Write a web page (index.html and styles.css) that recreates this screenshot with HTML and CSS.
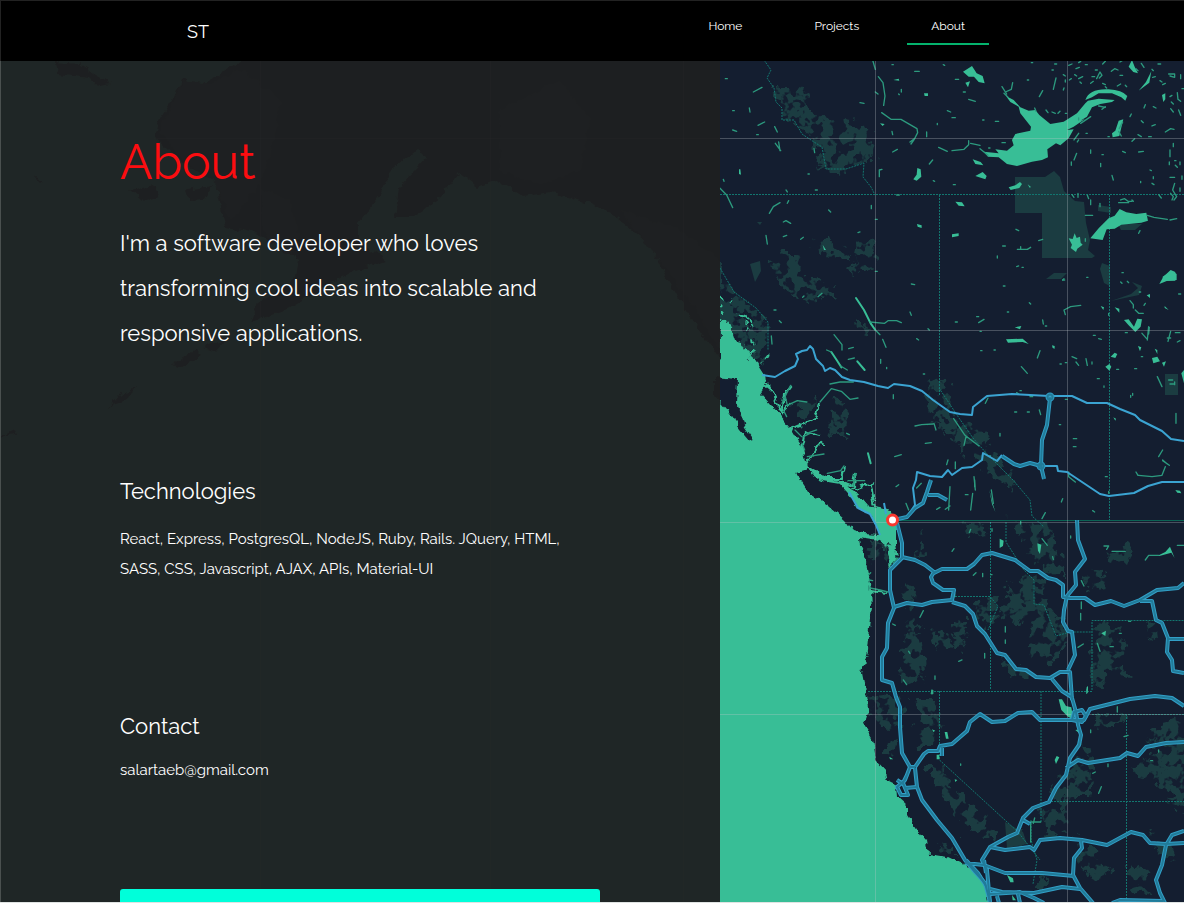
FILE: index.html
```html
<!DOCTYPE html>
<html lang="en">
<head>
<meta charset="utf-8">
<meta name="viewport" content="width=device-width, initial-scale=1">
<title>ST - About</title>
<link rel="stylesheet" href="styles.css">
</head>
<body>
<div class="shell">
  <svg class="map" viewBox="0 0 1184 903" preserveAspectRatio="xMinYMin slice" aria-hidden="true">
    <defs>
      <filter id="coast" x="0" y="0" width="1184" height="903" filterUnits="userSpaceOnUse" color-interpolation-filters="sRGB">
        <feTurbulence type="fractalNoise" baseFrequency=".12" numOctaves="3" seed="4"/>
        <feDisplacementMap in="SourceGraphic" scale="8" xChannelSelector="R" yChannelSelector="G"/>
      </filter>
      <filter id="mottle" x="700" y="40" width="500" height="880" filterUnits="userSpaceOnUse" color-interpolation-filters="sRGB">
        <feTurbulence type="fractalNoise" baseFrequency=".09" numOctaves="3" seed="8" result="n"/>
        <feDisplacementMap in="SourceGraphic" in2="n" scale="22" xChannelSelector="R" yChannelSelector="G" result="d"/>
        <feColorMatrix in="n" type="matrix" values="0 0 0 0 0  0 0 0 0 0  0 0 0 0 0  0 0 14 0 -6" result="m"/>
        <feComposite in="d" in2="m" operator="in"/>
      </filter>
      <g id="freeways">
        <path d="M898 519L907 517 915 508 923 503 927 492 931 480M928 495l10 0 9 5M897 523L902 543V558L890 570V590L894 608 888 623 887 648 882 657V680L892 683 896 697 900 707V727L902 753 910 767H915M915 768L917 787 922 800 937 820 952 838 965 860 975 872 985 883 990 902"/>
        <path d="M894 607L907 603 922 605 932 602 952 600 954 590 943 590 933 583 931 577 934 572 925 565 915 560 902 557M934 573L942 569H967L974 564 982 555 992 553 1015 560 1030 571 1038 571 1048 578 1056 580 1063 585V597L1070 598 1085 598 1095 605 1111 601 1124 606 1140 600 1157 590 1178 588 1184 583"/>
        <path d="M952 602L965 606 973 614 977 626 985 634 997 653 1005 655 1016 669 1026 670 1036 677 1050 678 1060 672 1070 672 1072 700M1052 679L1062 691 1073 698M1077 520L1078 540 1085 559 1075 572 1076 585 1067 596 1064 610 1063 622 1068 631 1072 632 1075 655 1068 670"/>
        <path d="M1140 601H1152L1156 620 1162 623 1168 638 1167 652 1172 660 1173 671 1184 673M1168 639H1184"/>
        <path d="M1072 698L1076 712 1078 725 1081 735 1079 745 1070 758 1066 775 1056 788 1049 802 1033 808 1023 818 1017 833 1008 837 990 847 982 860 987 870 990 903M1023 820L1030 824M910 767L905 780 897 787 901 795 908 795 903 783 907 775M917 787L905 788M897 780l6 4M915 767L924 754 928 751 938 751 940 746 952 744 967 731 970 722 980 714 992 722 1005 721 1018 713 1032 712 1040 720 1062 720 1084 720 1090 709 1110 704 1130 699 1155 696 1172 698 1184 706M942 746v10M1066 768L1078 760 1088 763 1120 758 1127 753 1138 756 1146 747 1166 743 1184 742"/>
        <path d="M990 847L1005 850 1030 847 1034 850 1040 840 1060 838 1082 840 1107 845 1131 832 1143 835 1150 843 1166 844 1184 843M1184 831L1172 835 1166 845 1162 865 1156 880 1160 893 1165 903M1081 841L1082 848 1074 858 1073 875 1080 888 1093 903M965 863L984 865 1005 873 1042 873 1074 876M990 889L1002 892 1034 893 1062 887 1080 889M990 894L1020 892 1034 898 1044 903M966 860L978 873 986 886M984 860L986 873M1112 903L1120 900 1163 901M997 896L999 903M1018 894L1020 903"/>
        <path d="M1050 398L1047 425 1042 440 1041 466 1044 479M1002 456L1014 464 1020 466 1030 463 1041 466M1074 712l8 -2 4 6 -4 6 -10 -2Z"/>
        <circle cx="1050" cy="397" r="2.500"/>
        <circle cx="1041" cy="466" r="2.500"/>
      </g>
    </defs>
    <rect class="sea" width="1184" height="903"/>
    <g filter="url(#coast)">
      <path class="land" d="M241 40V60L216 77 197 87 184 77 174 97 158 123 154 137 179 160 216 183 220 203 225 227 257 233 298 260 294 280 257 303 250 323 285 310 349 273 386 260 358 240 358 223 381 193 390 170 418 150 427 157 399 187 395 217 413 217 441 197 459 173 478 187 496 180 523 197 551 192 588 203 611 213 652 247 666 277 689 315 720 360V294L727 310 729 318 737 342 751 350 758 363 765 374 766 384 760 393 782 417 790 427 802 447 808 467 828 478 846 482 856 494 868 507 880 509 889 512 894 521 889 532 896 545 897 560 890 567 887 556 888 546 878 540 859 537 860 547 865 558 869 577 871 590 872 607 870 627 868 650 862 672 865 687 868 700 869 710 864 725 873 740 876 760 887 772 889 781 897 785 898 797 907 805 907 815 918 832 927 842 929 854 948 857 965 865 979 873 987 887 991 915H1200V40Z"/>
      <path class="land" d="M797 473L807 470 822 481 840 484 852 498 862 510 872 517 880 534 863 533 853 530 845 520 828 505 808 492 800 480ZM715 378L738 380 737 403 745 427 752 437 751 442 740 429 727 410 715 396ZM55 62L80 64 96 75 110 83 97 86 90 78 73 76 57 74ZM130 190L153 185 160 196 143 202ZM185 190L213 186 205 199 190 200ZM173 364L195 350 200 355 178 370ZM107 410L120 395 135 387 128 400 113 405ZM0 437L15 430 17 435ZM33 176L43 181 40 183ZM204 348L230 336 215 352Z"/>
      <path class="forest" d="M184 80L210 84 240 70 262 84 280 100 276 130 262 180 232 220 222 200 216 184 180 158 160 130ZM500 110L560 80 590 120 580 170 540 185 500 170ZM620 210L680 230 720 260V350L690 300 666 270 640 235ZM262 190L290 200 300 240 290 255 262 230Z"/>
      <path class="water-line" d="M745 322l6 10 3 20 -2 8M724 310l8 -10M722 322l12 -8 12 3 8 10M770 353l-8 10M768 385l14 28 10 -10M781 413l4 -20 6 -8M788 430l14 -6 14 -6 4 -14M800 450l4 -18 16 4M806 464l14 -20 6 2M827 478l14 0 3 -12M836 480l18 6 2 -14M852 490l22 -8M875 507l-4 -22M735 340l-14 -4M893 535l-10 14M870 591l16 2M762 378l8 14"/>
      <path class="lake" d="M848 490L856 492 866 506 880 508 893 512 896 526 896 545 898 560 888 548 880 538 880 520 870 514 858 508Z"/>
    </g>

    <!-- Parks and forests -->
    <g class="forest" filter="url(#mottle)">
      <path d="M773 88l18 0 10 -2 14 32 30 3 20 4 9 18 -3 20 -14 0 -10 10 -24 0 -6 -24 -14 -18 -16 -10ZM812 246l16 -8 16 12 6 12 -14 -4 -22 -8ZM858 240l16 6 4 18 -12 10 -14 0 4 -16ZM770 262l26 -4 12 20 20 6 10 12 -28 6 -30 -16ZM720 280l14 10 30 24 6 24 -10 26 -18 -16 -24 -38ZM830 400l18 4 -4 34 -16 0ZM800 405l16 -6 -4 16 -14 4ZM856 320l20 8 -14 12ZM931 378l16 6 8 14 -10 10 20 16 26 10 -6 14 20 14 14 28 -20 -6 -50 -50 -24 -30ZM930 420l16 4 -4 18ZM780 252l16 0 8 12 -18 0Z"/>
      <path d="M870 538l20 4 -4 22 -18 -4ZM920 525l8 30 -12 6ZM905 582l10 6 -2 30 10 20 2 40 -24 4 0 -30 8 -34ZM928 630l22 4 -2 18 -16 -6ZM962 526l20 -4 6 12 -20 4ZM1008 524l36 -2 18 30 2 26 -22 -10 -18 -24ZM1012 580l30 -6 8 34 18 24 -6 28 -36 4 4 -40 -30 -10ZM980 600l14 -4 6 16 -16 16 -12 -10ZM1078 570l26 4 2 16 -18 -2ZM1106 550l20 -4 4 12 -20 6ZM1094 626l14 -4 20 20 -4 16 8 20 -22 -8 -14 20 -6 -40ZM1145 620l12 4 2 16 -10 -2ZM952 622l16 0 -4 30 -14 -4ZM1000 650l16 14 14 10 -20 4Z"/>
      <path d="M866 694l18 -2 20 6 -2 26 -16 8 -14 -20ZM912 700l28 0 0 16 -6 30 -22 0 8 -30ZM888 736l8 2 -4 18 -6 -4ZM926 764l20 0 8 30 24 16 22 30 -22 -6 -28 -24 -16 -30ZM1010 830l12 -2 4 18 -18 2ZM1092 714l30 0 0 10 -24 4ZM1085 745l8 24 -4 28 -18 0 -10 12 -12 -20 22 -20ZM1130 770l30 -20 6 -18 24 -14 4 86 -20 8 -8 -20ZM1150 730l34 -14 0 18 -30 14ZM1076 832l14 20 20 16 -12 16 -16 -14ZM1128 866l20 4 4 18 -10 8 -14 -8ZM1148 830l20 10 10 20 -18 -4ZM944 842l12 0 0 14 -18 -8ZM1040 876l6 0 -2 12 -8 0ZM1042 808l24 0 4 24 -24 4Z"/>
    </g>
    <path class="forest" d="M1015 177h30l9 -6 6 6 4 14 11 10 9 1 2 21 4 17 -2 10 7 6 -3 2h-50v-45h-27v-36ZM1098 205l13 2v6l-13 -2ZM1118 224h24l-7 6h-14ZM1102 263l8 3v20l-6 -3 -4 -14ZM1046 279l8 -6h13l-6 6ZM1165 374h13v21h-13ZM1111 301l20 -7 7 -6 -6 -6 10 4 -3 9 -19 4ZM750 264l10 -3 1 10 -6 11ZM757 222l5 0 -2 3ZM1005 822l18 10 4 12 -20 4Z"/>

    <!-- Provincial, state and national borders -->
    <g class="border">
      <path d="M720 194.500H1184M939.500 195V395M1109.500 195V521M868 691.500H1092M939.500 691V760L1018 832 1040 860M1041 691V822M1092 690V620.500H1184M1126.500 714V903M1048 801.500H1184M1092 714.500H1184M990.500 522V690M955 596.500H990L998 606 988 630M1006 522V542L1024 570 1034 580 1034 604 1044 605 1056 636 1070 632 1092 632"/>
      <path d="M764 60l7 10 -4 8 7 10 2 14 6 6 0 12 12 0 8 14 12 8 8 5 4 22 20 0 18 -6 -1 14 8 10 4 8M720 268l14 24 22 16 12 14 0 28M939 388l20 30 14 20 14 16 26 26 17 20 2 16 12 11M1031 820v20l6 20 -4 24"/>
    </g>
    <path class="national" d="M897 520.500H1184"/>

    <!-- Large lakes -->
    <g class="lake">
      <g transform="translate(952 60) scale(.3333)">
        <path d="M162 108L185 120 205 142 230 152 250 150 262 165 295 192 335 185 375 160 400 130 408 122 440 116 488 120 480 126 445 132 420 142 405 170 385 182 400 176 365 200 345 210 365 208 350 235 325 256 312 250 286 268 288 292 270 300 240 305 195 318 165 312 140 292 108 290 95 275 140 280 130 268 165 272 185 256 180 240 190 222 235 212 237 200 205 160 200 140 175 126Z"/>
        <path d="M400 120Q412 85 470 88Q510 90 526 108L520 122 508 112 480 100 440 100 420 112ZM33 35L60 18 74 40 92 48 98 70 80 66 66 50 50 50ZM40 68l14 -4 -6 18ZM62 298l24 8 8 10 -24 -4ZM70 348l22 -12 12 12 -4 10ZM170 382l20 -6 14 -10 6 6 -8 12 -26 6ZM227 373l10 8 -4 2ZM10 425l20 2 8 12 -18 -2ZM0 523l20 -3 0 8 -20 4ZM415 535l25 -30 30 -30 18 -8 15 -20 20 10 30 5 30 -4 5 24 -20 6 -60 6 -20 12 -24 2 -12 32ZM350 535l12 2 6 -17 6 14 10 -4 2 18 6 6 -16 12 -4 10 -16 -12 4 -10ZM632 650l28 -18 14 10 0 18 -40 4ZM560 92l22 -26 16 -32 -6 34ZM630 105l10 -5 0 18 -6 8ZM480 220l10 -8 10 -30 14 -4 -12 50 -20 4ZM530 20l10 -20 8 20 10 20 -14 -4Z"/>
      </g>
      <g transform="translate(720 60) scale(.3333)">
        <path d="M592 324l10 4 2 22 -14 12 -10 -4 10 -14ZM57 328l4 0 2 16 -6 -2ZM612 100l12 0 0 8 -10 0ZM591 492l14 4 0 8 -12 -4ZM480 190l14 2 -6 6ZM520 60l16 -4 2 6ZM308 554l10 16 -6 0Z"/>
      </g>
      <g transform="translate(952 270) scale(.3333)">
        <path d="M622 42l12 -22 22 -20 14 6 0 26 -24 0ZM516 150l14 -2 16 22 10 -24 14 2 -4 22 -16 16 -20 -20ZM188 172l20 -4 -4 10ZM162 208l50 -2 18 16 -18 -6 -44 2ZM600 264l16 -4 8 14 -20 6ZM630 278l12 -4 -6 16ZM460 290l12 -8 6 8 -6 12ZM476 260l12 -12 8 4 -6 12ZM558 228l10 4 -4 12ZM446 108l10 4 -2 8ZM488 112l14 4 0 12ZM584 76l10 -4 0 12ZM608 236l8 4 0 12ZM688 310l8 -10 0 40ZM300 226l8 2 0 8 -6 -2ZM484 442l8 4 -2 6ZM650 120l-12 -12 0 6Z"/>
      </g>
      <g transform="translate(952 480) scale(.3333)"><path d="M143 176l12 6 -2 16 -10 6ZM256 190l12 4 -4 28 -6 -10ZM670 30l14 2 4 8 -12 -2ZM448 460l14 -8 -2 16ZM620 226l20 -10 14 -16 14 34 -10 -16 -36 10ZM404 622l4 -4 0 20 -6 0ZM112 30l10 40 8 26 -10 -24Z"/></g>
      <g transform="translate(952 690) scale(.3333)"><path d="M320 28l10 0 12 20 16 4 6 36 -16 -8 -20 -20ZM308 210l6 -12 8 4 -10 20ZM165 555l18 10 2 12 -10 0ZM370 120l14 -2 0 14ZM180 615l12 16 -10 0ZM8 268l8 2 -6 6Z"/></g>
      <g transform="translate(720 690) scale(.3333)"><path d="M508 200l12 8 -10 0ZM674 126l8 0 4 20 -8 0ZM650 194l8 0 0 14 -8 0ZM636 118l10 4 -6 4ZM634 0l6 0 0 12 -8 0Z"/></g>
    </g>

    <!-- Rivers and small lakes -->
    <g class="stream">
      <g transform="translate(720 60) scale(.3333)">
        <path d="M458 0l8 28M475 50l14 18 6 40 -4 28M485 158l28 20 30 0 48 28 2 12 -10 20 -10 14M100 96l26 -14M88 144l2 12M114 196l20 -10M38 210l12 4M164 200l8 16M166 250l16 22M176 246l4 26M282 266l2 12M0 385l20 20 18 38M148 460l12 -20 20 -12M190 486l8 -4 14 8M138 526l4 26M190 530l10 -4M242 538l8 -6M198 390l4 6M10 358l2 6M420 128l12 2M518 276l14 -8M570 246l14 -10M628 312l10 -12M656 262l26 12M620 216v14M640 362l4 2M478 350v-20l8 -2M454 446v-10M466 478h6M584 34l14 0M544 88v8M516 214l2 10M536 102l2 2M682 152l10 4M652 190v4M516 14h4M670 14l4 2M466 96l8 6M16 56h6M38 152h5M264 342h4M110 224h5M286 390h6M530 405h8M206 422l-4 8M326 450l6 6M466 634h6M414 518l6 -2"/>
      </g>
      <g transform="translate(952 60) scale(.3333)">
        <path d="M150 80l14 22M160 96l18 -8 4 -20M168 112l-12 -12M0 272l36 -4 14 -14 0 -12M56 250l28 6M84 266l24 20M262 110l10 -18M304 88l8 -34M248 144l4 10M50 118l20 6M34 96h6M10 58h10M0 173h10M130 184h10M150 248h10M226 60h4M238 8h4M300 30h4M308 12h6M334 90l2 -6M300 156l10 4M318 160l6 -6M340 160h4M282 150l6 8M372 26l10 -4M350 16l10 -4M380 8l6 -4M380 56l12 -6M420 50h8M434 56l10 -20 6 10 -8 8M416 70l8 -6M352 60l6 -4M368 44l6 4M334 44l6 4M340 60v6M430 30h6M452 70l8 4M478 34l10 -8 10 4M504 6l10 -6M504 46h8M496 78l10 -6M520 76l4 4M452 12l8 -8M400 14h6M512 186l-10 20M568 10l8 12M600 28l4 4M618 12h8M650 42h18l0 10 -14 -4M686 44v12M690 86h6M624 62l6 4M640 70l-8 4M604 140l8 4M580 134l-4 10M658 126l6 6M676 98l2 20 8 6M656 146l8 10M680 150l6 16M654 110l6 -4M534 170l4 -8M568 182l6 6M600 198l10 -4M640 216l16 -10 10 2M558 224l10 6M590 230l8 0M540 244l8 -8M560 276l14 -2M512 274l8 4M500 214l8 14M380 174v6M386 190l30 -20M380 220l-14 20M376 246l4 -6M366 300l8 -20M358 306v10M446 310v10M416 270v10M450 284h4M480 346l4 14M468 230h4M402 220h4M664 250v10M654 270v20M652 306v8M668 302h4M670 316l6 6M684 306v8M654 352h14M690 348v10M668 370l-6 20 12 20 -8 10M684 384v10M656 400l8 10 -4 10M620 404l8 10M594 330l4 2M604 350v6M566 364v4M600 370l6 4M506 420l12 -4 10 8 12 0M500 428l30 0M444 430v10M416 420v14M406 406l4 10M378 400v12M366 412l-6 -8M400 466h22M586 466l20 6 40 6M654 480l20 -4M560 520l4 -8M192 508l8 4M196 568l30 0 10 -6M206 560v6M152 558h8M136 588v6M194 620l6 -2M210 622h4M260 542l12 -4M332 660l4 -4M450 148l10 -8M440 138l20 4M400 536v8M110 264h4M4 374h6M92 180h4M540 420l4 4M460 80l4 4M384 66l4 4M552 26l6 6M602 52l8 -2"/>
      </g>
      <g transform="translate(720 270) scale(.3333)">
        <path class="river" d="M408 84l24 36 20 40 14 20M334 246l16 24 14 22M412 274l22 26M444 550l8 30"/>
        <path d="M450 156l44 4 10 -8 26 0 14 6M466 180l14 14M488 208l10 24M342 194l24 30 0 16M362 288l20 12M385 268l18 -4M330 342l30 -6 40 0M300 396l34 -40 30 8 26 24 24 -4M386 236l14 -4M320 240l14 6M585 468l20 -4 34 -2M642 460l6 20M616 520l18 -2M156 222l-2 -24M162 120h6M178 152l6 6M570 126l4 10M574 42l10 2M248 82l4 -4M520 374v12M500 292v4M624 176l4 4M524 560l20 -6M680 584l4 -14M610 312h4M294 80l12 -10M380 490l8 4M482 268v12M590 206l6 4M186 400l14 -30 12 -24M196 380l6 26 30 -14 28 4M190 420l10 20M225 480l20 20M250 500l20 -10M254 540l-8 -20M290 480l-30 10M262 560l50 -8M322 610l40 -8 10 -14M384 632l50 0M400 650l6 -40"/>
      </g>
      <g transform="translate(952 270) scale(.3333)">
        <path d="M154 48h5M232 98l4 4M74 140h6M80 158l16 -10M166 126h4M10 156h6M272 150l2 12M280 168h4M84 184h4M86 242h4M126 240h4M256 264l8 -22M208 290l18 20M324 282h4M340 278h4M340 134l-4 -14 20 -10 30 -4M332 30h6M404 22h4M360 260l14 6M402 266l4 20M372 276l8 10M440 206l8 2M424 196h6M420 276v6M436 326h6M456 348v4M494 298h6M548 296h6M568 260h4M534 92l10 12 0 10M550 120l10 10 14 0M576 106l4 -6M506 36l4 4M510 8h4M526 34l4 4M562 66h4M680 72h6M590 170l-4 40M570 190l14 16M592 172l-2 20M648 214l8 -30M670 188l14 0M676 216l8 -4M646 204l10 0M520 188h6M470 130v6M536 376v6M542 370v6M616 320l14 30M650 330h12M654 342h14M668 336v8M672 430v30M632 540l-12 20M632 572l20 14M640 590l-10 26 -30 4 -40 -4M632 570l14 12M364 506l10 0M364 530h8M350 606v14l20 16M234 380l8 0M194 368l6 4M226 426h6M262 420l4 14M188 426h6M322 464h4M340 388h6M100 400l8 -16M5 446l34 50 42 32M144 490v8M42 500l-6 26M66 620l4 40M10 576v20M110 558h6M204 362h4M460 620h6M552 606l6 10"/>
      </g>
      <g transform="translate(720 480) scale(.3333)">
        <path d="M690 20l-4 70M676 88l14 -10M650 88l10 -6M590 24l14 -14M558 70l8 20M610 392l-10 20M450 324l30 6 24 6M452 278l-6 6M448 300l10 2M446 330v-12M518 432l8 4M566 514l4 6M520 250l14 -16M645 588v10M536 14l-8 6M550 600l10 14M636 630v12"/>
      </g>
      <g transform="translate(952 480) scale(.3333)">
        <path d="M68 0v20M62 40l-6 50M118 30l6 40M270 116l10 -18M328 66l4 -10M422 92l6 4M470 34v6M206 124v8M120 146v8M52 158l4 -10M0 214l6 -8M64 286l8 -8M92 280v10M116 284h4M270 176l16 20M302 230l2 8M356 168v6M388 366l0 20M386 400v20M388 302l8 16M378 502l16 -10M160 440v16M160 480v10M98 520v14M20 544l10 -4M456 198h14l-6 10M480 214h40M580 240l10 -14 30 0M676 196h20M436 490l8 24M474 500h10M8 340l0 10M40 44h8M502 460h6M530 424h6"/>
      </g>
      <g transform="translate(952 690) scale(.3333)">
        <path d="M236 396v60M236 396l30 0M244 400l4 -16M440 310l8 -20M422 250l8 -4M468 222v8M516 140l12 -4M596 212h6M26 222v4M416 120v8M620 180v6M496 50v16M404 0v10M466 210h6"/>
      </g>
    </g>

    <!-- Graticule -->
    <path class="grid" d="M260.500 60V903M490.500 60V903M683.500 60V903M875.500 60V903M1067.500 60V903M154 138.500H1184M720 330.500H1184M720 522.500H1184M720 714.500H1184"/>

    <!-- Highways -->
    <g class="road">
      <path d="M762 375L775 377 785 371 795 366 798 359 796 354 802 351 807 350 810 346 813 349 816 359 823 366 825 371 830 368 835 370 842 377 850 380 864 382 878 386 888 388 894 384 910 386 922 391 933 400 950 412 960 414 972 415 973 407 987 396 1012 394 1049 396 1072 396 1087 403 1107 403 1120 409 1135 415 1140 420 1162 431 1171 439 1184 441"/>
      <path d="M1184 482L1162 482 1148 486 1134 493 1109 496 1100 494 1079 480 1067 472 1058 471 1057 466 1041 466M1002 455L997 461 983 453 982 460 972 467 962 468 952 475 948 470 942 477 930 476 917 472 916 480 913 488 915 505 907 517 898 519M849 492L858 508 870 514 876 525 880 535M884 503L886 514"/>
    </g>
    <use href="#freeways" class="freeway"/>
    <use href="#freeways" class="freeway-core"/>
    <circle class="pin" cx="892.500" cy="520" r="5"/>
  </svg>

  <header class="bar">
    <a class="brand" href="#">ST</a>
    <nav class="nav" aria-label="Main">
      <a class="nav-link" href="#home">Home</a>
      <a class="nav-link" href="#projects">Projects</a>
      <a class="nav-link nav-link-active" href="#about" aria-current="page">About</a>
    </nav>
  </header>

  <main class="page">
    <div class="panel">
      <h1 class="title">About</h1>
      <p class="intro">I'm a software developer who loves transforming cool ideas into scalable and responsive applications.</p>
      <section class="block">
        <h2 class="heading">Technologies</h2>
        <p class="copy">React, Express, PostgresQL, NodeJS, Ruby, Rails. JQuery, HTML, SASS, CSS, Javascript, AJAX, APIs, Material-UI</p>
      </section>
      <section class="block">
        <h2 class="heading">Contact</h2>
        <a class="mail" href="mailto:salartaeb@gmail.com">salartaeb@gmail.com</a>
      </section>
      <button class="action" type="button" aria-label="Get in touch"></button>
    </div>
  </main>
</div>
</body>
</html>
```
FILE: styles.css
```css
* { box-sizing: border-box; }

body {
  margin: 0;
  font-family: Raleway, Lato, sans-serif;
  color: #fff;
}

.shell {
  position: relative;
  display: flex;
  flex-direction: column;
  height: 100vh;
  overflow: hidden;
  border-bottom: 1px solid #dfe3e2;
}

/* Map backdrop */
.map {
  position: absolute;
  inset: 0;
  width: 100%;
  height: 100%;
}
.sea { fill: #38be96; }
.land { fill: #141e30; }
.forest { fill: #1b3c41; }
.lake { fill: #38be96; }
.water-line { fill: none; stroke: #38be96; stroke-width: 2; }
.stream {
  fill: none;
  stroke: #2c9a7e;
  stroke-width: 4;
  stroke-linecap: round;
  stroke-linejoin: round;
}
.river { stroke: #38be96; stroke-width: 6; }
.border { fill: none; stroke: #12766f; stroke-width: 1; stroke-dasharray: 2 1; }
.national { stroke: #0b6354; stroke-width: 1; }
.grid { fill: none; stroke: #c5c9cc; stroke-opacity: .3; stroke-width: 1; }
.road { fill: none; stroke: #3ba4d2; stroke-width: 2; stroke-linejoin: round; }
.freeway { fill: none; stroke: #329fc6; stroke-width: 4; stroke-linejoin: round; }
.freeway-core { fill: none; stroke: #217b99; stroke-width: 2; stroke-linejoin: round; }
.pin { fill: #fff; stroke: #f8382f; stroke-width: 3; }

/* Header */
.bar {
  position: relative;
  display: flex;
  flex: none;
  justify-content: space-between;
  height: 61px;
  padding: 0 195px 0 186px;
  background: #000;
  border-top: 1px solid #222;
  border-left: 1px solid #222;
}
.brand {
  align-self: center;
  color: #fff;
  font-size: 18px;
  text-decoration: none;
}
.nav { display: flex; align-items: flex-start; gap: 24px; }
.nav-link {
  height: 44px;
  padding: 0 24px;
  color: #fff;
  font-size: 12px;
  line-height: 50px;
  text-align: center;
  text-decoration: none;
  border-bottom: 2px solid transparent;
}
.nav-link-active { border-color: #04b36d; }

/* Content */
.page {
  position: relative;
  display: grid;
  grid-template-columns: 45fr 29fr;
  flex: 1;
  min-height: 0;
  overflow-y: auto;
  scrollbar-width: none;
}
.panel {
  padding: 65px 120px 80px 119px;
  background: rgba(30, 31, 32, .955);
  border-left: 1px solid #4a504f;
}
.title {
  margin: 0 0 23px;
  color: #fc0d10;
  font-size: 48px;
  font-weight: 400;
  line-height: 72px;
}
.intro { margin: 0; font-size: 22px; line-height: 45px; }
.block { margin-top: 120px; }
.intro + .block { margin-top: 113px; }
.heading {
  margin: 0 0 10px;
  font-size: 22px;
  font-weight: 400;
  line-height: 45px;
}
.copy { margin: 0; font-size: 15px; line-height: 30px; }
.mail {
  display: block;
  color: inherit;
  font-size: 15px;
  line-height: 22px;
  text-decoration: none;
}
.action {
  display: block;
  width: 100%;
  height: 50px;
  margin-top: 108px;
  background: #00ffda;
  border: 0;
  border-radius: 3px;
}
```
